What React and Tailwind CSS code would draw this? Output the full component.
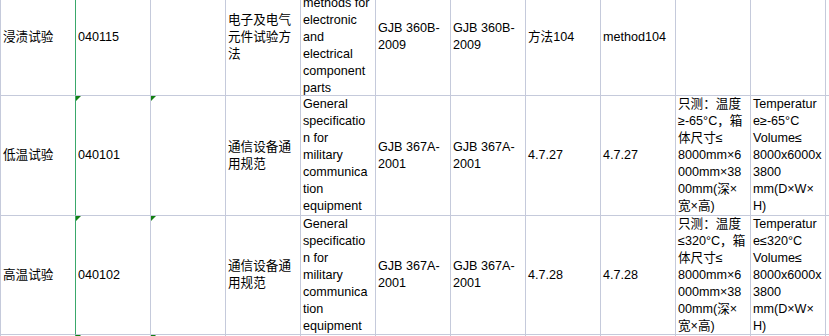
import React from 'react'

const LINE = 'border-[#c5cadb]'

const rows = [
	{
		h: 'h-[117px]',
		cells: [
			['浸渍试验'],
			['040115'],
			[],
			['电子及电气', '元件试验方', '法'],
			['Test', 'methods for', 'electronic', 'and', 'electrical', 'component', 'parts'],
			['GJB 360B-', '2009'],
			['GJB 360B-', '2009'],
			['方法104'],
			['method104'],
			[],
			[],
		],
		marks: false,
	},
	{
		h: 'h-[120px]',
		cells: [
			['低温试验'],
			['040101'],
			[],
			['通信设备通', '用规范'],
			['General', 'specificatio', 'n for', 'military', 'communica', 'tion', 'equipment'],
			['GJB 367A-', '2001'],
			['GJB 367A-', '2001'],
			['4.7.27'],
			['4.7.27'],
			['只测：温度', '≥-65°C，箱', '体尺寸≤', '8000mm×6', '000mm×38', '00mm(深×', '宽×高)'],
			['Temperatur', 'e≥-65°C', 'Volume≤', '8000x6000x', '3800', 'mm(D×W×', 'H)'],
		],
		marks: true,
	},
	{
		h: 'h-[119px]',
		cells: [
			['高温试验'],
			['040102'],
			[],
			['通信设备通', '用规范'],
			['General', 'specificatio', 'n for', 'military', 'communica', 'tion', 'equipment'],
			['GJB 367A-', '2001'],
			['GJB 367A-', '2001'],
			['4.7.28'],
			['4.7.28'],
			['只测：温度', '≤320°C，箱', '体尺寸≤', '8000mm×6', '000mm×38', '00mm(深×', '宽×高)'],
			['Temperatur', 'e≤320°C', 'Volume≤', '8000x6000x', '3800', 'mm(D×W×', 'H)'],
		],
		marks: true,
	},
	{
		h: 'h-[119px]',
		cells: [[], [], [], [], [], [], [], [], [], [], []],
		marks: true,
	},
]

const Mark = () => (
	<svg className="absolute left-0 top-0" width="5" height="5" viewBox="0 0 5 5">
		<polygon points="0,0 5,0 0,5" fill="#137f13" />
	</svg>
)

const Cell = ({ lines, first, mark }) => (
	<div
		className={`relative w-[75px] shrink-0 h-full border-r border-b ${first ? 'border-r-[#3aa86b] border-b-[#c5cadb]' : LINE} flex items-center pl-[2px] overflow-hidden`}
	>
		{mark && <Mark />}
		<div className="flex flex-col">
			{lines.map((l, i) => (
				<span key={i} className="whitespace-nowrap leading-[17px]">{l}</span>
			))}
		</div>
	</div>
)

export default function App() {
	return (
		<div className="w-[829px] h-[336px] overflow-hidden bg-white text-black">
			<div
				className="-mt-[21px] flex flex-col text-[12.6px]"
				style={{ fontFamily: '"Liberation Sans", Arial, "Noto Sans CJK SC", sans-serif' }}
			>
				{rows.map((row, r) => (
					<div key={r} className={`flex ${row.h}`}>
						<div className="w-px shrink-0 h-full bg-[#c5cadb]" />
						{row.cells.map((lines, c) => (
							<Cell key={c} lines={lines} first={c === 0} mark={row.marks && (c === 1 || c === 2)} />
						))}
						<div className={`flex-1 h-full border-b ${LINE}`} />
					</div>
				))}
			</div>
		</div>
	)
}
